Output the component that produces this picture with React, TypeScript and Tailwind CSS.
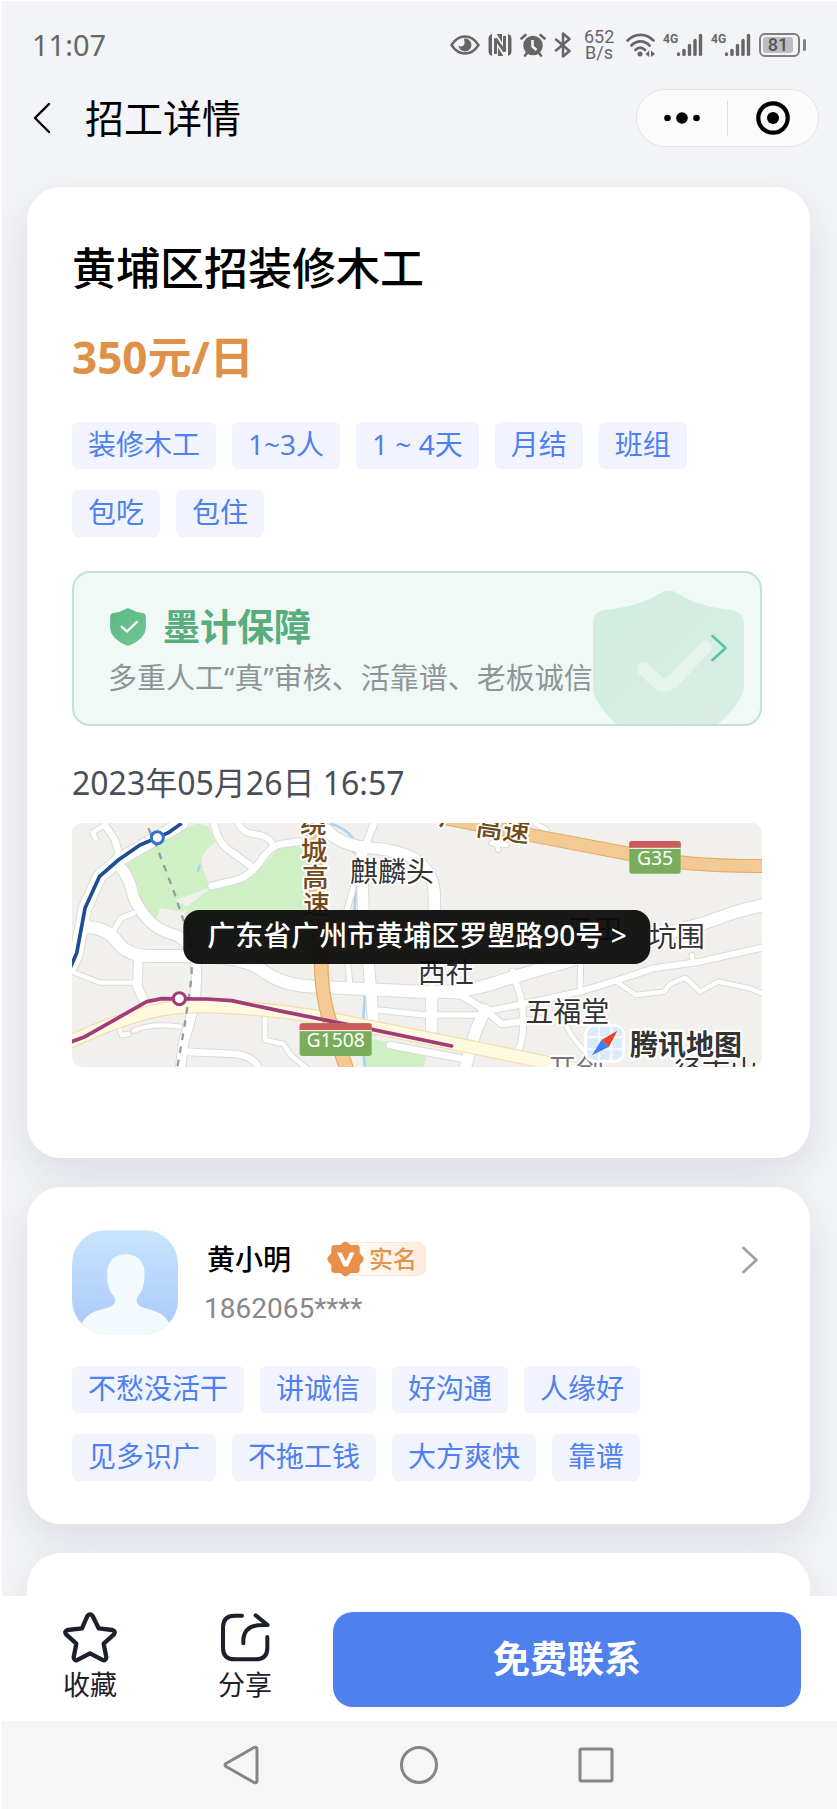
/**
 * Job detail page: job card, employer card and the contact bar
 */

import type { ReactNode } from 'react';

// ─── Data ───

const JOB_TAGS = ['装修木工', '1~3人', '1 ~ 4天', '月结', '班组', '包吃', '包住'];

const EMPLOYER_TAGS = [
  '不愁没活干',
  '讲诚信',
  '好沟通',
  '人缘好',
  '见多识广',
  '不拖工钱',
  '大方爽快',
  '靠谱',
];

// ─── Status bar ───

function Signal() {
  return (
    <div className="flex w-10 items-start">
      <span className="w-[13px] font-[Roboto] text-[12px] font-bold leading-3">4G</span>
      <svg width="27" height="24" viewBox="0 0 27 24" fill="none" stroke="currentColor" strokeWidth="3.4" strokeLinecap="round">
        <path d="M2.5 21.4V21M8 21.4V17.500M13.5 21.4V12.5M19 21.4V7.5M24.5 21.4V2.5" />
      </svg>
    </div>
  );
}

function StatusBar() {
  return (
    <div className="flex items-center justify-between pl-[30px] pr-[31px] pt-5 text-[#666]">
      <span className="text-[29px] leading-[48px]">11:07</span>
      <div className="flex items-center gap-2">
        {/* eye comfort */}
        <svg width="30" height="20" viewBox="0 0 30 20" fill="none" stroke="currentColor" strokeWidth="2.4">
          <path d="M1.5 10C5 4.5 9.500 1.5 15 1.5S25 4.500 28.5 10C25 15.5 20.5 18.5 15 18.5S5 15.5 1.5 10Z" />
          <path d="M14 3.5A6.500 6.500 0 1 1 8.500 10.500C11 12.500 14.500 11 14.600 8Z" fill="currentColor" stroke="none" />
        </svg>
        {/* nfc */}
        <svg width="24" height="24" viewBox="0 0 24 24">
          <rect x="0.5" y="1" width="23" height="22" rx="4.500" fill="currentColor" />
          <path d="M7 24V4L17 20V0" fill="none" stroke="#f3f4f7" strokeWidth="6" />
          <path d="M7.500 21V5.500L16.500 18.500V3" fill="none" stroke="currentColor" strokeWidth="3" strokeLinejoin="bevel" />
        </svg>
        {/* alarm */}
        <svg width="26" height="24" viewBox="0 0 26 24" fill="none" stroke="currentColor" strokeLinecap="round">
          <circle cx="13" cy="12.5" r="9.8" fill="currentColor" stroke="none" />
          <path d="M1.5 5.5L5.5 2M24.5 5.5L20.5 2M5 22.5L7.5 19.5M21 22.5L18.5 19.5" strokeWidth="2.6" />
          <path d="M12.5 7V13.5L16.5 17" stroke="#f3f4f7" strokeWidth="2.6" strokeLinecap="butt" />
        </svg>
        {/* bluetooth */}
        <svg width="18" height="26" viewBox="0 0 18 26" fill="none" stroke="currentColor" strokeWidth="2.5" strokeLinejoin="round" strokeLinecap="round">
          <path d="M2 7.5L15.5 19L9 24.5V1.5L15.5 7L2 18.5" />
        </svg>
        <div className="mx-1 w-[30px] text-center font-[Roboto] text-[18px] leading-4">
          <p>652</p>
          <p>B/s</p>
        </div>
        {/* wifi */}
        <svg width="29" height="24" viewBox="0 0 29 24" fill="none" stroke="currentColor" strokeWidth="2.7" strokeLinecap="round">
          <path d="M1.5 7.5C9 0 20 0 27.5 7.5M5.5 12.5C10.5 7 18.5 7 23.5 12.5M9.5 17C12.5 14 16 14 19 17" />
          <circle cx="14" cy="21" r="2.5" fill="currentColor" stroke="none" />
          <path d="M23.200 17.5V24L19.5 21ZM25 17.5V24L29 21Z" fill="currentColor" stroke="none" />
        </svg>
        <Signal />
        <Signal />
        {/* battery */}
        <div className="flex w-[47px] items-center justify-between">
          <div className="h-6 w-[41px] rounded-md border-2 border-[#808080] p-[2px]">
            <div className="w-[30px] rounded-[3px] bg-[#bdbdbf] text-center font-[Roboto] text-[18px] font-medium leading-4 text-[#555]">
              81
            </div>
          </div>
          <div className="h-3 w-[3px] rounded-full bg-[#808080]" />
        </div>
      </div>
    </div>
  );
}

// ─── Title bar ───

function TitleBar() {
  return (
    <header className="flex h-[98px] items-center pl-[31px] pr-[18px]">
      <button type="button" aria-label="返回">
        <svg width="18" height="32" viewBox="0 0 18 32" fill="none" stroke="#000" strokeWidth="2.4" strokeLinecap="round" strokeLinejoin="round">
          <path d="M16 2L2 16L16 30" />
        </svg>
      </button>
      <h1 className="ml-[34px] text-[39px] leading-[56px] text-black">招工详情</h1>
      <div className="ml-auto flex h-[58px] w-[183px] items-center rounded-full border border-[#e3e4e6] bg-[#fbfbfb]">
        <button type="button" aria-label="更多" className="flex flex-1 justify-center">
          <svg width="36" height="12" viewBox="0 0 36 12">
            <circle cx="3.5" cy="6" r="3.3" />
            <circle cx="18" cy="6" r="5.8" />
            <circle cx="32.5" cy="6" r="3.3" />
          </svg>
        </button>
        <div className="h-[35px] w-px bg-[#dedfe1]" />
        <button type="button" aria-label="关闭" className="flex flex-1 justify-center">
          <svg width="34" height="34" viewBox="0 0 34 34">
            <circle cx="17" cy="17" r="14.7" fill="none" stroke="#000" strokeWidth="4.2" />
            <circle cx="17" cy="17" r="6" />
          </svg>
        </button>
      </div>
    </header>
  );
}

// ─── Shared blocks ───

function TagList({ tags, className }: { tags: string[]; className: string }) {
  return (
    <ul className={`flex flex-wrap gap-x-4 gap-y-[21px] ${className}`}>
      {tags.map((tag) => (
        <li key={tag} className="whitespace-pre rounded-md bg-[#f1f4fe] px-4 pb-[3px] text-[28px] leading-[44px] text-[#4e80ee]">
          {tag}
        </li>
      ))}
    </ul>
  );
}

function Card({ children, className }: { children?: ReactNode; className: string }) {
  return (
    <section className={`relative ml-[25px] mr-[27px] bg-white pl-[45px] pr-12 shadow-[0_16px_40px_rgba(40,40,75,0.11)] ${className}`}>
      {children}
    </section>
  );
}

function Chevron({ className }: { className: string }) {
  return (
    <svg className={className} width="24" height="32" viewBox="0 0 24 32" fill="none" stroke="currentColor" strokeWidth="2.6" strokeLinecap="round" strokeLinejoin="round">
      <path d="M5.5 4L18.5 16L5.5 28" />
    </svg>
  );
}

// ─── Guarantee banner ───

function GuaranteeBanner() {
  return (
    <a href="#guarantee" className="relative mt-[34px] block overflow-hidden rounded-[18px] border-2 border-[#bfe4d1] bg-[#f0f9f6] pb-[26px] pl-[34px] pt-[30px]">
      <svg className="absolute bottom-0 right-4" width="151" height="134" viewBox="458 571 454 402">
        <defs>
          <linearGradient id="shieldBack" x1="0" y1="0" x2="1" y2="1">
            <stop offset="0" stopColor="#d0eddd" />
            <stop offset="1" stopColor="#d9eee6" />
          </linearGradient>
        </defs>
        <path
          d="M458 668Q460 635 495 631Q600 618 655 583Q686 561 718 583Q775 620 875 631Q910 638 912 668V860Q908 910 828 978H532Q462 910 458 870Z"
          fill="url(#shieldBack)"
        />
        <path d="M610 808L650 845Q674 868 698 845L795 743" fill="none" stroke="#e6f4ee" strokeWidth="40" strokeLinecap="round" />
      </svg>
      <div className="relative flex items-center gap-[17px] pl-[2px]">
        <svg width="36" height="38" viewBox="183 143 108 115">
          <defs>
            <linearGradient id="shieldIcon" x1="0" y1="0" x2="1" y2="1">
              <stop offset="0" stopColor="#5cb982" />
              <stop offset="1" stopColor="#70c592" />
            </linearGradient>
          </defs>
          <path d="M230 146Q237 142 244 146Q262 157 284 159Q291 161 291 168V206Q288 236 243 256Q237 259 231 256Q186 236 183 206V168Q183 161 190 159Q212 157 230 146Z" fill="url(#shieldIcon)" />
          <path d="M218 200L234 214L264 185" fill="none" stroke="#fff" strokeWidth="7" strokeLinecap="round" />
        </svg>
        <h3 className="text-[37px] font-bold leading-[48px] text-[#57ae7c]">墨计保障</h3>
      </div>
      <p className="relative mt-[7px] text-[29px] leading-[40px] text-[#8e9596]">多重人工“真”审核、活靠谱、老板诚信</p>
      <Chevron className="absolute right-[29px] top-[59px] text-[#56c5a0]" />
    </a>
  );
}

// ─── Map ───

const ROADS: { d: string; w: number }[] = [
  { d: 'M165 45L195 90L212 150', w: 20 },
  { d: 'M165 45L127 68L138 88', w: 13 },
  { d: 'M490 30Q500 90 530 115L605 170', w: 20 },
  { d: 'M565 40Q580 70 610 72Q660 78 668 105', w: 18 },
  { d: 'M750 95L690 103Q660 110 630 155Q595 205 550 212L485 228', w: 20 },
  { d: 'M830 60Q865 100 940 112Q1040 118 1090 145Q1150 185 1153 250V320', w: 34 },
  { d: 'M972 40L945 110', w: 20 },
  { d: 'M935 110L940 300L962 530L972 660', w: 32 },
  { d: 'M915 215L882 330L900 530', w: 15 },
  { d: 'M250 310L212 325L188 368', w: 15 },
  { d: 'M66 485L150 518H260', w: 13 },
  { d: 'M265 450L262 530L290 590', w: 26 },
  { d: 'M435 440Q445 500 432 590L400 700L392 772', w: 28 },
  { d: 'M395 725L560 732Q610 740 625 772', w: 20 },
  { d: 'M645 610V690L700 702L722 735L770 775', w: 14 },
  { d: 'M205 650L215 675L235 672', w: 13 },
  { d: 'M252 662Q300 638 390 650', w: 13 },
  { d: 'M1145 540V660', w: 34 },
  { d: 'M980 600L1130 615H1300', w: 16 },
  { d: 'M980 545L1250 560', w: 14 },
  { d: 'M1020 705L1230 745', w: 20 },
  { d: 'M1240 560L1305 600L1355 642L1470 628', w: 20 },
  { d: 'M1305 600L1278 660L1245 775', w: 34 },
  { d: 'M1388 485L1412 560Q1430 670 1405 720', w: 18 },
  { d: 'M1305 605L1420 582L1590 545L1710 508L1810 475L1950 455L2140 412', w: 18 },
  { d: 'M1925 435L1930 460', w: 13 },
  { d: 'M1592 460L1590 545', w: 15 },
  { d: 'M1700 515L1758 555L1842 545L1860 522L1905 503L1950 545L2005 515L2100 535L2140 552', w: 13 },
  { d: 'M1550 650Q1570 690 1610 730', w: 13 },
  { d: 'M1335 80L1345 120M1325 100L1370 105M1455 40L1490 60', w: 13 },
  { d: 'M105 352Q170 350 205 400Q235 438 300 438H440Q590 440 650 490Q710 530 800 530L1110 545Q1260 550 1360 510L1600 440L1960 340L2060 305L2140 285', w: 36 },
  { d: 'M205 165Q240 200 250 260Q290 350 360 370Q420 385 430 440', w: 32 },
  { d: 'M395 40L322 83L205 150L148 200L105 295L80 430L66 465', w: 38 },
];

const PLACES = [
  { name: '麒麟头', x: 900, y: 215 },
  { name: '西社', x: 1103, y: 519 },
  { name: '五福堂', x: 1426, y: 635 },
  { name: '子田', x: 1548, y: 391 },
  { name: '坑围', x: 1796, y: 412 },
  { name: '径古山', x: 1872, y: 812 },
];

const HIGHWAY_NAME = [
  { char: '绕', x: 750, y: 70 },
  { char: '城', x: 752, y: 150 },
  { char: '高', x: 756, y: 230 },
  { char: '速', x: 760, y: 311 },
];

function RoadShield({ x, y, width, code }: { x: number; y: number; width: number; code: string }) {
  return (
    <g>
      <rect x={x} y={y} width={width} height="98" rx="8" fill="#79ad5c" />
      <path d={`M${x} ${y + 20}v-12q0 -8 8 -8h${width - 16}q8 0 8 8v12z`} fill="#cb5c59" />
      <path d={`M${x} ${y + 22}h${width}`} stroke="#fff" strokeWidth="3" />
      <text x={x + width / 2} y={y + 72} textAnchor="middle" fontSize="58" fill="#fff">
        {code}
      </text>
    </g>
  );
}

function MapPreview() {
  return (
    <div className="relative mt-4 overflow-hidden rounded-[10px]">
      <svg className="h-[244px] w-full bg-[#f1f0ec]" viewBox="66 39 2070 732" preserveAspectRatio="xMidYMid slice" fill="none" strokeLinejoin="round">
        <g fill="#cfefc5">
          <path d="M220 170L300 110L440 40L475 50L500 95Q440 130 460 180L480 232L405 260L375 270L410 290L400 305L330 295L315 340L255 240Z" />
          <path d="M740 110L690 112L610 195L550 222L475 240L410 290L400 370L420 390H800V110Z" />
          <path d="M950 685L1115 712L1105 772H940Z" />
          <path d="M1110 720L1130 740L1120 772H1105Z" />
        </g>
        <path d="M450 165L443 185M840 40Q900 60 912 95V130M918 220L912 330M945 555L935 690L945 772" stroke="#a9d2f5" strokeWidth="8" />
        <g stroke="#dadad8">
          {ROADS.map((road) => (
            <path key={road.d} d={road.d} strokeWidth={road.w + 6} strokeLinecap="round" />
          ))}
        </g>
        <g stroke="#fff">
          {ROADS.map((road) => (
            <path key={road.d} d={road.d} strokeWidth={road.w} strokeLinecap="round" />
          ))}
        </g>

        {/* main road and highways */}
        <path d="M40 705Q280 590 420 590Q600 585 850 628L1260 710L1620 785" stroke="#f3dcae" strokeWidth="42" />
        <path d="M40 705Q280 590 420 590Q600 585 850 628L1260 710L1620 785" stroke="#fff9df" strokeWidth="35" />
        <path d="M790 30L795 200L812 420L815 500Q820 580 845 650L895 790" stroke="#e2a961" strokeWidth="44" />
        <path d="M790 30L795 200L812 420L815 500Q820 580 845 650L895 790" stroke="#f3c994" strokeWidth="37" />
        <path d="M1190 25L1440 75L1740 132Q1900 170 2150 168" stroke="#e2a961" strokeWidth="42" />
        <path d="M1190 25L1440 75L1740 132Q1900 170 2150 168" stroke="#f3c994" strokeWidth="36" />

        {/* metro lines */}
        <path d="M295 55L320 110L370 240L410 360L425 420V500L405 640L382 772" stroke="#9b9ba3" strokeWidth="7" strokeDasharray="20 20" />
        <path d="M395 40L355 68L322 83L270 105L205 150L148 200L105 295L80 430L60 475" stroke="#1f4d93" strokeWidth="11" />
        <path d="M60 697L105 680L290 575L335 566L470 567L545 572L700 605L965 658L1205 708" stroke="#a13c79" strokeWidth="11" strokeLinecap="round" />
        <circle cx="322" cy="83" r="18" fill="#fff" stroke="#2f74cf" strokeWidth="9" />
        <circle cx="388" cy="566" r="18" fill="#fff" stroke="#a13c79" strokeWidth="9" />

        <g fontSize="84" fill="#333" stroke="#fff" strokeWidth="10" paintOrder="stroke">
          {PLACES.map((place) => (
            <text key={place.name} x={place.x} y={place.y}>
              {place.name}
            </text>
          ))}
        </g>
        <text x="1495" y="806" fontSize="84" fill="#777" stroke="#fff" strokeWidth="10" paintOrder="stroke">
          开创
        </text>
        <g fontSize="80" fontWeight="500" fill="#704a18" stroke="#fff" strokeWidth="12" paintOrder="stroke">
          {HIGHWAY_NAME.map((item) => (
            <text key={item.char} x={item.x} y={item.y}>
              {item.char}
            </text>
          ))}
          <text x="1165" y="44" transform="rotate(8 1165 44)">
            广
          </text>
          <text x="1276" y="76" transform="rotate(8 1276 76)">
            高速
          </text>
        </g>
        <RoadShield x={749} y={640} width={216} code="G1508" />
        <RoadShield x={1738} y={93} width={154} code="G35" />

        {/* map provider */}
        <rect x="1607" y="646" width="114" height="108" rx="26" fill="#dcebf9" stroke="#fff" strokeWidth="8" />
        <path d="M1647 650V750M1684 650V750M1611 682H1717M1611 718H1717" stroke="#f7fbff" strokeWidth="6" />
        <path d="M1702 662L1654 690L1677 710Z" fill="#ea4427" />
        <path d="M1654 690L1677 710L1626 736Z" fill="#3f80f5" />
        <text x="1740" y="734" fontSize="84" fontWeight="700" fill="#333" stroke="#fff" strokeWidth="14" paintOrder="stroke">
          腾讯地图
        </text>
      </svg>
      <button
        type="button"
        className="absolute left-1/2 top-[87px] -translate-x-1/2 whitespace-nowrap rounded-2xl bg-[#0c0c0c]/95 px-6 pb-1 text-[28px] font-medium leading-[50px] text-white"
      >
        广东省广州市黄埔区罗塱路90号 &gt;
      </button>
    </div>
  );
}

// ─── Cards ───

function JobCard() {
  return (
    <Card className="rounded-[34px] pb-[91px] pt-[51px]">
      <h2 className="text-[44px] font-medium leading-[60px] text-black">黄埔区招装修木工</h2>
      <p className="mt-[29px] text-[44px] font-bold leading-[60px] text-[#de9148]">350元/日</p>
      <TagList tags={JOB_TAGS} className="mt-[35px]" />
      <GuaranteeBanner />
      <p className="mt-[33px] text-[32px] leading-[48px] text-[#4b4e59]">2023年05月26日 16:57</p>
      <MapPreview />
    </Card>
  );
}

function EmployerCard() {
  return (
    <Card className="mt-[29px] rounded-[34px] pb-[43px] pt-[43px]">
      <div className="flex items-start">
        <svg width="106" height="104" viewBox="154 270 320 312" className="rounded-[34px]">
          <defs>
            <linearGradient id="avatar" x1="0" y1="0" x2="0" y2="1">
              <stop offset="0" stopColor="#c8e4fd" />
              <stop offset="1" stopColor="#aac8fa" />
            </linearGradient>
          </defs>
          <rect x="154" y="270" width="320" height="312" fill="url(#avatar)" />
          <path
            d="M316 342C350 342 373 362 373 398C373 430 368 448 358 462C348 474 345 486 356 496C372 512 432 505 450 556V582H182V556C200 505 260 512 276 496C289 486 285 474 275 462C265 448 260 430 260 398C260 362 284 342 316 342Z"
            fill="#f3fbff"
          />
        </svg>
        <div className="ml-[26px] pt-[9px]">
          <div className="flex items-center gap-9 pl-[3px]">
            <h3 className="text-[28px] font-medium leading-10 text-black">黄小明</h3>
            <div className="flex items-center">
              <svg className="relative" width="37" height="36" viewBox="0 0 37 36">
                <path
                  d="M16.5 1.2Q18.5 -0.3 20.5 1.2L23.8 4H29.5Q32.5 4 32.7 7V12L36 16Q37.2 18 36 20L32.7 24V29Q32.5 32 29.5 32H23.8L20.5 34.8Q18.5 36.3 16.5 34.8L13.2 32H7.5Q4.5 32 4.3 29V24L1 20Q-0.2 18 1 16L4.3 12V7Q4.5 4 7.5 4H13.2Z"
                  fill="#e8904a"
                />
                <path d="M10 11.5H14.5L18.8 20.5L23 11.5H27.5L20.8 25.5H16.8Z" fill="#fff" />
              </svg>
              <span className="-ml-5 rounded-lg border border-[#fbe6d3] bg-linear-to-r from-white to-[#fdecdc] pl-6 pr-2 text-[24px] font-medium leading-8 text-[#e09550]">
                实名
              </span>
            </div>
          </div>
          <p className="mt-[10px] font-[Roboto] text-[28px] leading-10 text-[#85888c]">1862065****</p>
        </div>
        <button type="button" aria-label="查看雇主" className="ml-auto pt-[14px] text-[#a0a0a2]">
          <Chevron className="block" />
        </button>
      </div>
      <TagList tags={EMPLOYER_TAGS} className="mt-8" />
    </Card>
  );
}

// ─── Bottom ───

function ActionBar() {
  return (
    <footer className="relative flex items-start bg-white pb-[14px] pl-[61px] pr-9 pt-4">
      <button type="button" className="flex flex-col items-center text-[27px] leading-9 text-[#1b202b]">
        <svg width="54" height="52" viewBox="190 338 162 156" fill="none" stroke="#1b202b" strokeWidth="13" strokeLinejoin="round">
          <path d="M263 350Q271 340 279 350L297 387L338 392Q350 396 342 406L312 433L320 474Q318 487 307 481L271 462L235 481Q224 487 222 474L230 433L200 406Q192 396 204 392L247 387Z" />
        </svg>
        <span className="mt-[3px]">收藏</span>
      </button>
      <button type="button" className="ml-[101px] flex flex-col items-center text-[27px] leading-9 text-[#1b202b]">
        <svg width="50" height="52" viewBox="661 338 150 156" fill="none" stroke="#1b202b" strokeWidth="12" strokeLinecap="round" strokeLinejoin="round">
          <path d="M727 349H705Q670 349 670 384V445Q670 480 705 480H768Q803 480 803 445V413" />
          <path d="M731 432V420Q735 376 790 377H804L768 348" />
        </svg>
        <span className="mt-[3px]">分享</span>
      </button>
      <button type="button" className="ml-[61px] flex-1 rounded-[20px] bg-[#4e80ee] pb-[2px] text-[37px] font-bold leading-[93px] text-white">
        免费联系
      </button>
    </footer>
  );
}

function SystemNav() {
  return (
    <nav className="flex items-center justify-center gap-[138px] bg-[#f6f6f6] py-6 pr-[2px]">
      <button type="button" aria-label="后退">
        <svg width="40" height="40" viewBox="0 0 40 40" fill="none" stroke="#868686" strokeWidth="3" strokeLinejoin="round">
          <path d="M5 18.5L33 2.5Q36 1.5 36 4.5V35.5Q36 38.5 33 37.5L5 21.5Q3 20 5 18.5Z" />
        </svg>
      </button>
      <button type="button" aria-label="主页">
        <svg width="40" height="40" viewBox="0 0 40 40" fill="none" stroke="#868686" strokeWidth="3">
          <circle cx="20" cy="20" r="17.5" />
        </svg>
      </button>
      <button type="button" aria-label="最近任务">
        <svg width="40" height="40" viewBox="0 0 40 40" fill="none" stroke="#868686" strokeWidth="3">
          <rect x="3" y="4" width="32" height="32" rx="1.5" />
        </svg>
      </button>
    </nav>
  );
}

export default function App() {
  return (
    <div className="flex min-h-screen flex-col border-l-2 border-t border-white bg-[#f3f4f7] font-['Noto_Sans','Noto_Sans_CJK_SC',sans-serif]">
      <StatusBar />
      <TitleBar />
      <main className="flex flex-1 flex-col pt-5">
        <JobCard />
        <EmployerCard />
        <Card className="mt-[29px] min-h-[43px] flex-1 rounded-t-[34px]" />
      </main>
      <ActionBar />
      <SystemNav />
    </div>
  );
}
